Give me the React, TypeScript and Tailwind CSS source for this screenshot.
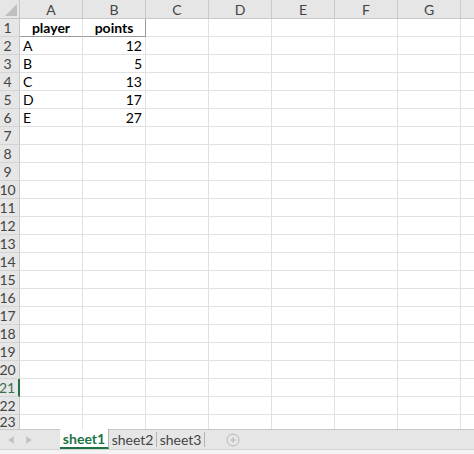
const cols = ["A", "B", "C", "D", "E", "F", "G", ""];

const data: Record<number, [string, string]> = {
  2: ["A", "12"],
  3: ["B", "5"],
  4: ["C", "13"],
  5: ["D", "17"],
  6: ["E", "27"],
};

const rows = Array.from({ length: 23 }, (_, i) => i + 1);

function Corner() {
  return (
    <div className="w-[20px] h-[19px] shrink-0 bg-[#e6e6e6] border-r border-b border-[#c6c6c6] relative">
      <svg className="absolute right-[2px] bottom-[2px]" width="12" height="12" viewBox="0 0 12 12">
        <polygon points="12,0 12,12 0,12" fill="#bfbfbf" />
      </svg>
    </div>
  );
}

function Cell({ row, col }: { row: number; col: number }) {
  let content: React.ReactNode = null;
  let cls = "";
  if (row === 1 && col < 2) {
    content = col === 0 ? "player" : "points";
    cls = "font-bold justify-center border-b-[#9a9a9a]";
    if (col === 1) cls += " border-r-[#9a9a9a]";
  } else if (data[row] && col < 2) {
    content = data[row][col];
    cls = col === 0 ? "justify-start pl-[3px]" : "justify-end pr-[3px]";
  }
  // last row sits under the tab bar, only its top part shows
  const h = row === 23 ? "h-[14px] border-b-0" : "h-[18px] border-b";
  return (
    <div
      className={`w-[63px] shrink-0 flex items-center border-r border-[#e1e1e1] text-[14px] leading-none text-black overflow-hidden ${h} ${cls}`}
    >
      {content}
    </div>
  );
}

export default function App() {
  return (
    <div
      className="w-[474px] h-[454px] bg-white overflow-hidden flex flex-col"
      style={{ fontFamily: "Lato, 'Liberation Sans', sans-serif" }}
    >
      <div className="h-[429px] overflow-hidden shrink-0">
        {/* column headers */}
        <div className="flex">
          <Corner />
          {cols.map((c, i) => (
            <div
              key={i}
              className="w-[63px] h-[19px] shrink-0 bg-[#e6e6e6] border-r border-b border-[#c9c9c9] flex items-center justify-center text-[14px] text-[#444]"
            >
              {c}
            </div>
          ))}
        </div>
        {rows.map((r) => (
          <div key={r} className="flex">
            <div
              className={`w-[20px] shrink-0 bg-[#e6e6e6] border-[#d4d4d4] flex items-center justify-center pr-[4px] text-[14px] leading-none ${
                r === 23 ? "h-[14px]" : "h-[18px] border-b"
              } ${
                r === 21
                  ? "text-[#3a6e4c] border-r-2 border-r-[#217346] bg-[#d9d9d9]"
                  : "text-[#444] border-r border-r-[#c6c6c6]"
              }`}
            >
              {r}
            </div>
            {cols.map((_, ci) => (
              <Cell key={ci} row={r} col={ci} />
            ))}
          </div>
        ))}
      </div>

      {/* sheet tabs */}
      <div className="h-[20px] shrink-0 bg-[#e6e6e6] border-t border-[#c8c8c8] flex items-stretch text-[14px]">
        <div className="w-[60px] flex items-center gap-[12px] pl-[8px]">
          <svg width="6" height="8" viewBox="0 0 6 8">
            <polygon points="6,0 6,8 0,4" fill="#c4c4c4" />
          </svg>
          <svg width="6" height="8" viewBox="0 0 6 8">
            <polygon points="0,0 0,8 6,4" fill="#c4c4c4" />
          </svg>
        </div>
        <div className="w-[49px] -mt-[1px] bg-white flex items-center justify-center font-bold text-[#217346] border-b-2 border-[#217346] border-r border-r-[#b5b5b5]">
          sheet1
        </div>
        <div className="w-[48px] flex items-center justify-center text-[#444] my-[2px] border-r border-[#b5b5b5]">
          sheet2
        </div>
        <div className="w-[48px] flex items-center justify-center text-[#444] my-[2px] border-r border-[#b5b5b5]">
          sheet3
        </div>
        <div className="flex items-center pl-[21px]">
          <svg width="14" height="14" viewBox="0 0 14 14">
            <circle cx="7" cy="7" r="6" fill="none" stroke="#b8b8b8" strokeWidth="1" />
            <path d="M7 4v6M4 7h6" stroke="#b8b8b8" strokeWidth="1" />
          </svg>
        </div>
      </div>
      <div className="flex-1 bg-[#f3f3f3] border-t border-[#d4d4d4]" />
    </div>
  );
}
